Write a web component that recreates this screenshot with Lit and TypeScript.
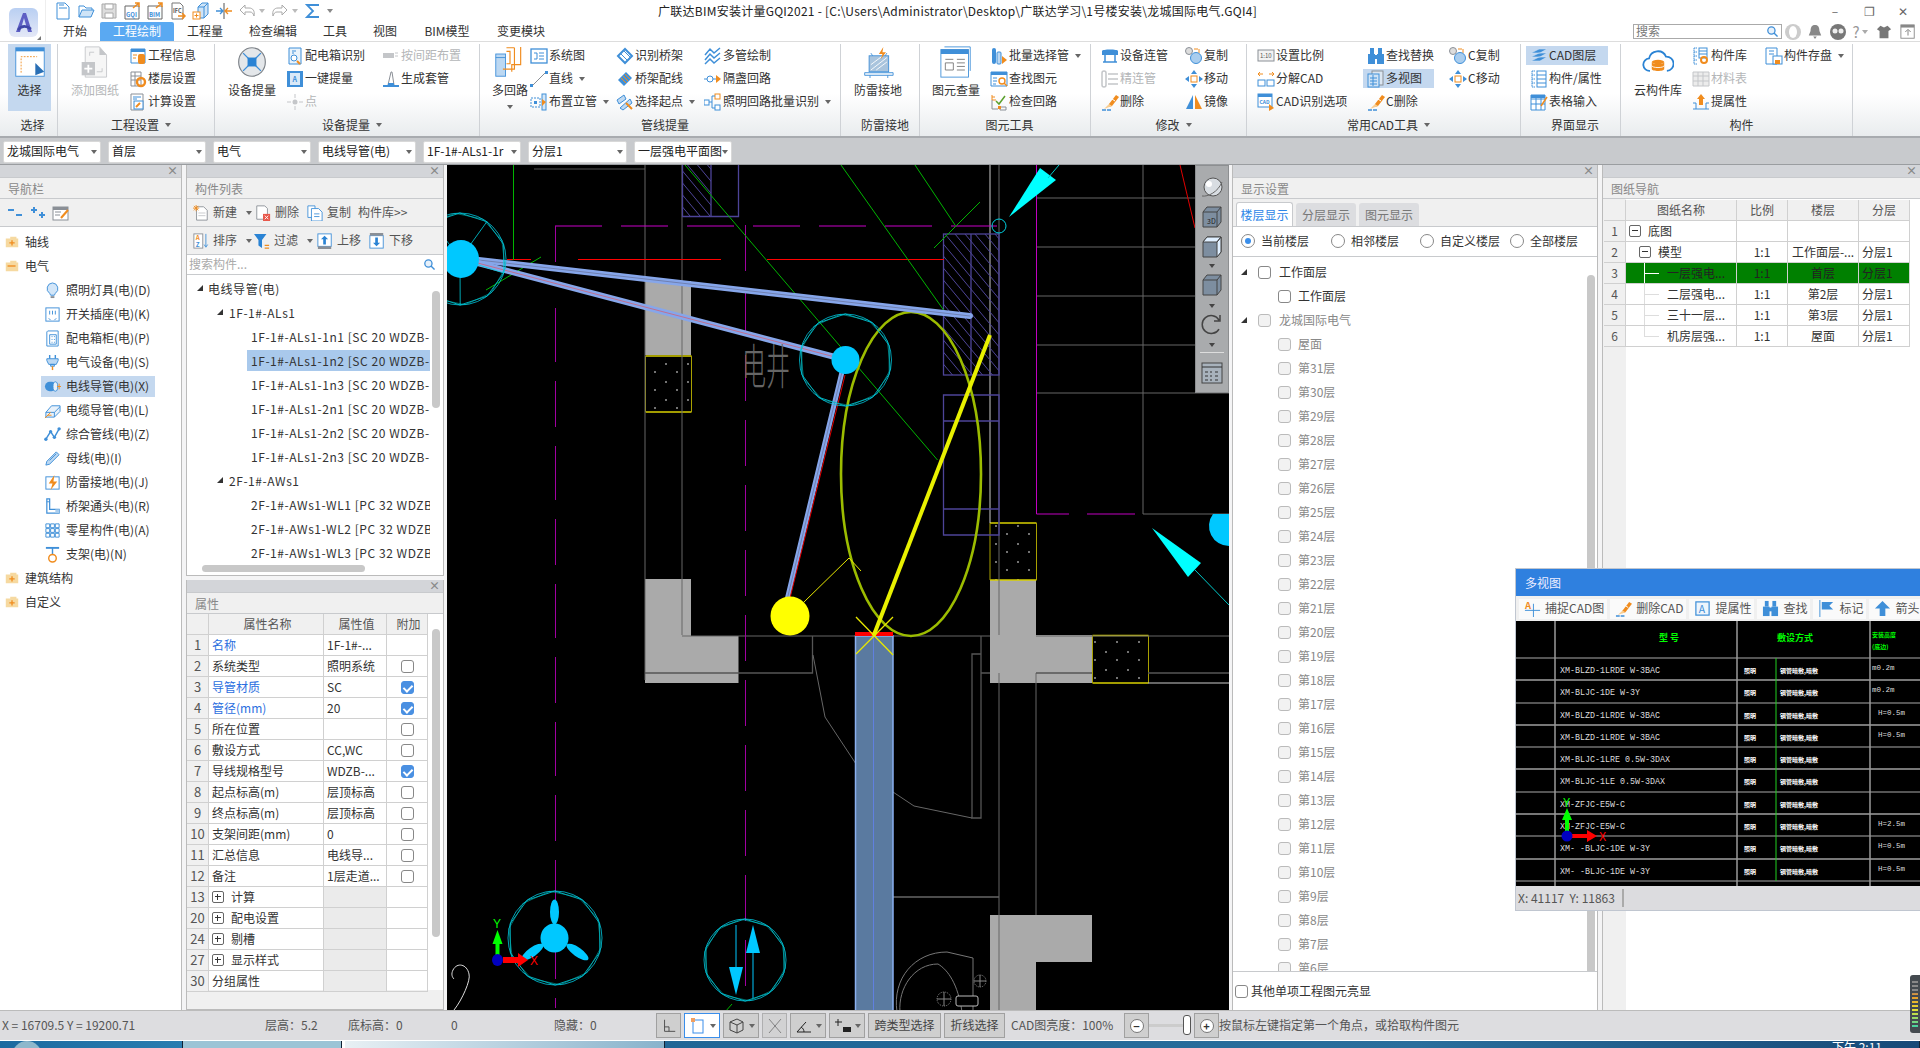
import { LitElement, html, css, svg } from 'lit';
import { customElement } from 'lit/decorators.js';

const B = '#3f8fd8';
const O = '#f08c1e';
const G = '#8a8f96';
const L = '#c4c6c9';

// small icons, drawn in an 18x18 box
const ICONS: Record<string, any> = {
  doc: svg`<path d="M3 1h8l4 4v12H3z" fill="#fff" stroke=${B}/><path d="M5 3h5M5 6h8" stroke=${B}/>`,
  open: svg`<path d="M2 15V4h5l2 2h6v2" fill="none" stroke=${B}/><path d="M2 15l3-7h12l-3 7z" fill="#cfe4f7" stroke=${B}/>`,
  save: svg`<path d="M2 2h14v14H2z" fill="#ddd" stroke="#aaa"/><path d="M5 2h8v5H5zM5 11h8v5H5z" fill="#fff" stroke="#aaa"/>`,
  gq: svg`<path d="M2 4h14v13H2z" fill="#fff" stroke="#666"/><path d="M10 6l6-5M12 1h4v4" fill="none" stroke=${O} stroke-width="1.5"/><text x="3" y="15" font-size="6" fill=${B} font-weight="700">GQI</text>`,
  bim: svg`<path d="M2 4h14v13H2z" fill="#fff" stroke="#666"/><path d="M10 6l6-5M12 1h4v4" fill="none" stroke=${O} stroke-width="1.5"/><text x="3" y="15" font-size="6" fill=${B} font-weight="700">BIM</text>`,
  ifc: svg`<path d="M3 1h8l3 3v13H3z" fill="#fff" stroke="#777"/><text x="4" y="11" font-size="5.5" fill="#555" font-weight="700">IFC</text><path d="M9 14h7M13 11l3 3-3 3" fill="none" stroke=${O} stroke-width="1.5"/>`,
  cube: svg`<path d="M6 5l4-4h6v11l-4 4H6z" fill="#cfe4f7" stroke=${B}/><path d="M6 5h6v11M12 5l4-4" fill="none" stroke=${B}/><rect x="1" y="10" width="7" height="7" fill="#fff" stroke=${O}/><path d="M4.500 11.500v4M2.500 13.500h4" stroke=${O}/>`,
  split: svg`<path d="M9 1v16" stroke="#555"/><path d="M1 9h6M5 6l3 3-3 3" fill="none" stroke=${B} stroke-width="1.3"/><path d="M17 9h-6M13 6l-3 3 3 3" fill="none" stroke=${O} stroke-width="1.3"/>`,
  undo: svg`<path d="M7 3L2 8l5 5V10h5c2 0 3 1 4 4 1-5-1-8-5-8H7z" fill="#fff" stroke="#aaa"/>`,
  redo: svg`<path d="M11 3l5 5-5 5V10H6c-2 0-3 1-4 4-1-5 1-8 5-8h4z" fill="#fff" stroke="#aaa"/>`,
  sigma: svg`<path d="M15 3H3l6 6-6 6h12" fill="none" stroke=${B} stroke-width="1.800"/>`,
  info: svg`<path d="M2 2h14v14H2z" fill="#fff" stroke=${B}/><path d="M2 2h14v3H2z" fill=${B}/><path d="M4 8h4M4 11h3" stroke=${O}/><rect x="9" y="7" width="7" height="10" fill=${O} rx="2"/>`,
  floor: svg`<path d="M2 2h10v14H2zM2 6h10M2 10h10M6 2v14" fill="#fff" stroke=${G}/><circle cx="12" cy="12" r="4" fill="none" stroke=${O} stroke-width="2.400"/>`,
  calc: svg`<path d="M2 1h12v16H2z" fill="#fff" stroke=${G}/><path d="M4 4h8M4 6h4" stroke=${B}/><rect x="5" y="8" width="9" height="8" fill="#fff" stroke=${B}/><path d="M7 14l4-4" stroke=${O} stroke-width="2"/>`,
  box: svg`<path d="M3 1h12v16H3z" fill="#eaf3fb" stroke=${B}/><path d="M6 4h4M6 6h2" stroke=${B}/><circle cx="8" cy="11" r="3" fill="#fff" stroke=${B}/><path d="M11 14l3 3" stroke=${O} stroke-width="2"/>`,
  onekey: svg`<rect x="1" y="1" width="16" height="16" fill=${B}/><rect x="4" y="3" width="10" height="12" fill="#d9e9f8"/><text x="6.500" y="12" font-size="7" fill=${B} font-weight="700">A</text>`,
  point: svg`<circle cx="9" cy="9" r="2.500" fill=${L}/><path d="M1 9h4M13 9h4M9 1v4M9 13v4" stroke=${L}/>`,
  spacing: svg`<path d="M1 6h11v5H1z" fill=${L}/><path d="M13 6h3M13 9h3" stroke=${L}/>`,
  sleeve: svg`<path d="M9 2L6 15h6L10 2z" fill="#fff" stroke=${G}/><path d="M1 15h16v2H1z" fill=${B}/><path d="M6 13h6v2H6z" fill=${B}/>`,
  system: svg`<rect x="1" y="2" width="16" height="14" fill="#fff" stroke=${B} stroke-width="1.300"/><path d="M9 6h5M9 9h5M9 12h5M4 6h3v6H4" fill="none" stroke=${B}/>`,
  line: svg`<path d="M2 16L16 2" stroke=${G}/><rect x="0" y="14" width="3" height="3" fill=${B}/><rect x="15" y="1" width="3" height="3" fill=${B}/>`,
  riser: svg`<path d="M1 5h9v9H1z" fill="none" stroke=${B} stroke-dasharray="2 1"/><rect x="4" y="8" width="3" height="3" fill=${B}/><rect x="12" y="1" width="4" height="16" fill="#d5e7f7" stroke=${B}/><path d="M12 6l4 3-4 4z" fill=${O}/>`,
  bridge: svg`<path d="M2 9l7-7 7 7-7 7z" fill="none" stroke=${B} stroke-width="2"/><path d="M5 7l6 6M8 4l6 6" stroke=${B}/>`,
  bridge2: svg`<path d="M2 10l8-8 6 6-8 8z" fill=${B}/><path d="M5 8l5 5M7 6l5 5M9 4l5 5" stroke=${O}/>`,
  start: svg`<path d="M1 7l7-5 2 4-7 5zM4 15l10-9 2 4-9 7z" fill="#bfd9f1" stroke=${B}/><path d="M10 10l6 6" stroke=${O} stroke-width="2"/>`,
  multi: svg`<path d="M1 8l5-6 4 4 6-5M1 13l5-6 4 4 6-5M1 17l5-5 4 4 6-5" fill="none" stroke=${B} stroke-width="1.500"/>`,
  skip: svg`<circle cx="6" cy="9" r="3" fill="#fff" stroke=${B}/><path d="M0 9h3M9 9h3" stroke=${B}/><path d="M12 5l5 4-5 4z" fill=${O}/>`,
  lamp: svg`<rect x="0" y="7" width="5" height="5" fill="#fff" stroke=${B}/><rect x="11" y="1" width="5" height="5" fill="#fff" stroke=${O}/><rect x="11" y="12" width="5" height="5" fill="#fff" stroke=${B}/><path d="M5 9h3M8 3h3M8 15h3M8 3v12" fill="none" stroke=${B}/>`,
  batch: svg`<rect x="2" y="1" width="4" height="16" fill=${B} rx="2"/><rect x="7" y="5" width="4" height="12" fill="#bcd8f2" stroke=${B} rx="1"/><path d="M12 9l5 4-5 4z" fill=${O}/>`,
  findel: svg`<path d="M1 2h16v14H1z" fill="#fff" stroke=${B}/><path d="M1 2h16v3H1z" fill=${B}/><path d="M3 8h4M3 11h4M3 14h3" stroke=${B}/><circle cx="12" cy="11" r="3" fill="none" stroke=${O} stroke-width="1.400"/><path d="M14 13l3 3" stroke=${O} stroke-width="1.400"/>`,
  check: svg`<path d="M2 2v5h4M2 4h3" fill="none" stroke=${O}/><path d="M6 8l3 3 6-8" fill="none" stroke="#5aa02c" stroke-width="1.500"/><path d="M2 7v9h6M10 14h6v3h-6z" fill="none" stroke=${G}/><rect x="8" y="13" width="3" height="3" fill=${O}/>`,
  devpipe: svg`<path d="M1 4c0-2 16-2 16 0v4H1z" fill=${B}/><path d="M4 8v7h10V8M2 15h14" fill="none" stroke=${B} stroke-width="1.500"/>`,
  finepipe: svg`<rect x="1" y="1" width="4" height="16" rx="2" fill="none" stroke=${L} stroke-width="1.500"/><path d="M7 4h10M7 9h10M7 14h10" stroke=${L} stroke-width="1.500"/>`,
  erase: svg`<path d="M8 11L15 2l3 2-7 9-3 1z" fill=${O}/><path d="M11 6l3 2" stroke="#fff"/><path d="M1 17h9" stroke=${B} stroke-width="1.500" stroke-dasharray="4 1"/><path d="M3 16l5-5 3 2z" fill="#f9cd90"/>`,
  copy: svg`<circle cx="4" cy="4" r="3.500" fill="#ddd" stroke=${G}/><path d="M9 2h4" stroke=${O}/><path d="M14 2v4" stroke=${O}/><circle cx="11" cy="11" r="5.500" fill="#a9cdee" stroke=${B}/>`,
  move: svg`<rect x="6" y="6" width="6" height="6" fill="#fff" stroke=${O}/><path d="M9 0l3 4H6zM9 18l3-4H6zM0 9l4-3v6zM18 9l-4-3v6z" fill=${B}/>`,
  mirror: svg`<path d="M8 2L1 16h7z" fill=${B}/><path d="M10 2l7 14h-7z" fill=${O}/>`,
  scale: svg`<rect x="1" y="3" width="16" height="11" fill="#f3f3f3" stroke=${G}/><text x="3" y="11" font-size="6" fill="#555">1:10</text>`,
  explode: svg`<path d="M1 4h5M3 2L1 4l2 2M17 4h-5M15 2l2 2-2 2" fill="none" stroke=${O}/><rect x="1" y="10" width="7" height="6" fill="none" stroke=${B}/><rect x="10" y="10" width="7" height="6" fill="none" stroke=${B}/>`,
  cadopt: svg`<rect x="1" y="1" width="14" height="13" fill="#fff" stroke=${B}/><path d="M1 1h14v3H1z" fill=${B}/><text x="2.500" y="11" font-size="5" fill=${B} font-weight="700">CAD</text><path d="M12 11l5 4-5 3z" fill=${O}/>`,
  binoc: svg`<rect x="1" y="7" width="7" height="10" fill=${B}/><rect x="10" y="7" width="7" height="10" fill=${B}/><rect x="3" y="1" width="4" height="6" fill=${B}/><rect x="11" y="1" width="4" height="6" fill=${B}/><rect x="7" y="8" width="4" height="4" fill=${B}/>`,
  views: svg`<rect x="5" y="1" width="11" height="14" fill="#dbe6f2" stroke=${G}/><rect x="1" y="4" width="11" height="13" fill="#d0e3f5" stroke=${B}/><path d="M3 8h7M3 11h7M3 14h7M6 5v11" stroke=${B}/>`,
  layers: svg`<path d="M1 6l8-4 8 0-7 4zM1 10l8-4 8 0-7 4zM1 14l8-4 8 0-7 4z" fill=${B} stroke="#d4e4f5" stroke-width=".6"/>`,
  props: svg`<path d="M2 1v16M2 1h3M2 5h3M2 9h3M2 13h3M2 17h3" stroke=${B} stroke-dasharray="1.500 .5"/><rect x="7" y="1" width="9" height="16" fill="#fff" stroke=${B}/><path d="M7 5h9M7 9h9M7 13h9" stroke=${B}/>`,
  tablei: svg`<path d="M1 2h14v15H1zM1 6h14M1 11h14M6 2v15M11 2v15" fill="#fff" stroke=${B}/><path d="M1 2h14v3H1z" fill=${B}/><path d="M11 13l6-9" stroke=${O} stroke-width="1.500"/>`,
  lib: svg`<path d="M2 1v16M2 1h3M2 5h3M2 9h3M2 13h3M2 17h3" stroke=${B} stroke-dasharray="1.500 .5"/><rect x="7" y="1" width="8" height="10" fill="#fff" stroke=${B}/><path d="M7 4h8M7 7h8" stroke=${B}/><circle cx="12" cy="13" r="3" fill="none" stroke=${O} stroke-width="2"/>`,
  material: svg`<path d="M1 2h16v14H1zM1 6h16M1 11h16M6 2v14M11 2v14" fill="#ececec" stroke=${L}/>`,
  pickprop: svg`<path d="M9 1l4 5h-2v6H7V6H5z" fill=${O}/><path d="M1 10h3M14 10h3M1 16h16M4 10v6M14 10v6" fill="none" stroke=${B}/>`,
  store: svg`<path d="M1 1h11v16H1z" fill="#fff" stroke=${B}/><path d="M4 4h5M4 7h5" stroke=${B}/><rect x="8" y="9" width="9" height="8" fill="#fff" stroke=${B}/><rect x="10" y="13" width="5" height="4" fill=${O}/>`,
  // nav tree
  bulb: svg`<path d="M9 1a6 6 0 0 0-3 11l1 2h4l1-2A6 6 0 0 0 9 1z" fill="#d3e6f8" stroke=${B}/><path d="M7 15h4v2H7z" fill=${G}/>`,
  socket: svg`<rect x="2" y="2" width="14" height="14" fill="#fff" stroke=${B}/><path d="M6 5v4M9 5v4M12 5v4M5 13l2 2M13 13l-2 2" stroke=${B}/>`,
  cabinet: svg`<path d="M4 1h11v16H3V2z" fill="#fff" stroke=${B}/><path d="M6 5h7v10H6z" fill="none" stroke=${B}/><path d="M8 7h1M10.500 7h1M8 10h1M10.500 10h1M8 13h1M10.500 13h1" stroke=${B}/>`,
  plug: svg`<path d="M6 1v4M12 1v4" stroke=${B} stroke-width="1.500"/><path d="M3 5h12v2l-2 4H5L3 7zM7 11h4v2H7z" fill="#bcd8f2" stroke=${B}/><path d="M9 13v4" stroke=${O} stroke-width="1.500"/>`,
  conduit: svg`<rect x="1" y="4" width="12" height="10" rx="5" fill=${B}/><ellipse cx="12" cy="9" rx="2.500" ry="5" fill="#e8f1fa" stroke=${B}/><path d="M16 6v6M14 9h4" stroke=${O}/>`,
  cable: svg`<path d="M2 11l6-7h9v6l-6 6H2z" fill="#e8f1fa" stroke=${B}/><path d="M2 11h9v5M11 11l6-6" fill="none" stroke=${B}/><path d="M1 17l6-6M4 14h4" stroke=${O}/>`,
  mixed: svg`<path d="M2 14l5-8 4 6 5-9" fill="none" stroke=${B} stroke-width="1.500"/><circle cx="2" cy="14" r="1.800" fill=${B}/><circle cx="7" cy="6" r="1.800" fill=${B}/><circle cx="11" cy="12" r="1.800" fill=${B}/><circle cx="16" cy="3" r="1.800" fill=${B}/>`,
  busbar: svg`<path d="M3 12L13 2l3 3L6 15l-4 1z" fill="#bcd8f2" stroke=${B}/><path d="M6 11l7-7" stroke=${B}/>`,
  thunder: svg`<rect x="2" y="3" width="14" height="13" fill="#fff" stroke=${B}/><path d="M11 1L5 10h4l-2 7 7-9h-4z" fill=${O}/>`,
  fitting: svg`<path d="M3 1h3v11h10v4H3z" fill="#fff" stroke=${B} stroke-width="1.300"/><rect x="12" y="12" width="4" height="4" fill="#a9cdee"/><path d="M3 4h3" stroke=${B}/>`,
  grid9: svg`<path d="M2 2h4v4H2zM7 2h4v4H7zM12 2h4v4h-4zM2 7h4v4H2zM7 7h4v4H7zM12 7h4v4h-4zM2 12h4v4H2zM7 12h4v4H7zM12 12h4v4h-4z" fill="#fff" stroke=${B}/>`,
  bracket: svg`<path d="M2 2h14" stroke=${B} stroke-width="2"/><path d="M9 2v7" stroke=${B} stroke-width="1.500"/><circle cx="9" cy="13" r="4" fill="none" stroke=${O} stroke-width="1.500"/>`,
  // toolbars
  collapse: svg`<path d="M2 6h6" stroke=${B} stroke-width="2"/><path d="M10 11h6" stroke=${B} stroke-width="2"/>`,
  expand: svg`<path d="M2 6h6M5 3v6M10 11h6M13 8v6" stroke=${B} stroke-width="2"/>`,
  edit: svg`<rect x="1" y="3" width="15" height="13" fill="#fff" stroke=${G}/><path d="M1 3h15v3H1z" fill=${G}/><path d="M3 8h6M3 11h5" stroke=${G}/><path d="M9 14l7-8" stroke=${O} stroke-width="2"/>`,
  newc: svg`<path d="M4 2h8l4 4v11H4z" fill="#fff" stroke=${G}/><path d="M6 9h8M6 12h8" stroke=${L}/><path d="M1 1l5 5M6 1L1 6M3.500 0v7M0 3.500h7" stroke=${O}/>`,
  del: svg`<path d="M2 1h9l3 3v12H2z" fill="#fff" stroke=${G}/><rect x="9" y="10" width="8" height="8" fill="#e8584c"/><path d="M11 12l4 4M15 12l-4 4" stroke="#fff"/>`,
  dup: svg`<path d="M1 1h8v13H1z" fill="#fff" stroke=${B}/><path d="M5 4h8l4 4v10H5z" fill="#fff" stroke=${B}/><path d="M8 10h6M8 13h6" stroke=${B}/>`,
  sort: svg`<rect x="1" y="1" width="10" height="16" fill="#fff" stroke=${G}/><text x="3" y="8" font-size="7" fill=${O} font-weight="700">A</text><text x="3" y="15.500" font-size="7" fill=${B} font-weight="700">Z</text><path d="M14.500 1v14M12.500 13l2 3 2-3" fill="none" stroke=${B}/>`,
  filter: svg`<path d="M0 1h14L9 8v9L5 14V8z" fill="#2a83d4"/><path d="M12 14h5M12 17h5" stroke=${O} stroke-width="1.500"/>`,
  up: svg`<rect x="1" y="1" width="15" height="14" fill="#fff" stroke=${B}/><path d="M1 15h15v3H1z" fill=${G}/><path d="M8.500 3l4 4H10v6H7V7H4.500z" fill="#2a83d4"/>`,
  down: svg`<rect x="1" y="3" width="15" height="14" fill="#fff" stroke=${B}/><path d="M1 0h15v3H1z" fill=${G}/><path d="M8.500 15l-4-4H7V5h3v6h2.500z" fill="#2a83d4"/>`,
  searchB: svg`<circle cx="7.500" cy="7.500" r="5" fill="#e8f1fa" stroke=${B} stroke-width="1.800"/><path d="M11 11l5 5" stroke=${B} stroke-width="2"/>`,
  capture: svg`<path d="M1 11h16M10 4v14" stroke=${B}/><text x="1" y="9" font-size="10" fill=${O} font-weight="700">A</text>`,
  aicon: svg`<rect x="2" y="2" width="14" height="14" fill="#eef5fc" stroke=${B} stroke-width="1.300"/><text x="5" y="14" font-size="11" fill=${B}>A</text>`,
  flag: svg`<path d="M2 0v18" stroke=${B}/><path d="M4 2h12l-4 4 4 4H4z" fill=${B}/>`,
  arrowup: svg`<path d="M9 1l8 8h-5v8H6V9H1z" fill=${B}/>`,
};

// large ribbon icons, 36x36
const BIG: Record<string, any> = {
  select: svg`<rect x="2" y="2" width="32" height="32" fill="#fff" stroke=${B}/><path d="M2 2h32v4H2z" fill=${B}/><path d="M8 30V12h18" fill="none" stroke=${O} stroke-dasharray="2 1.500"/><path d="M24 19l10 10-10 4z" fill="#2a6fb5"/>`,
  addDwg: svg`<path d="M7 1h16l8 9v25H7z" fill="#f6f6f6" stroke=${L}/><path d="M23 1v9h8" fill=${L}/><path d="M12 7v4M12 7h5M26 25v4h-6" fill="none" stroke=${L}/><rect x="3" y="18" width="15" height="15" fill=${L}/><path d="M10.500 21v9M6 25.500h9" stroke="#fff" stroke-width="2"/>`,
  device: svg`<ellipse cx="18" cy="18" rx="15" ry="16" fill="#e4e7ea" stroke="#7d8288" stroke-width="1.300"/><path d="M8 8l20 20M28 8L8 28" stroke=${B} stroke-width="1.500"/><rect x="13" y="13" width="10" height="10" fill="#2a83d4"/>`,
  multi: svg`<path d="M8 2h9v20H8z" fill="none" stroke=${O} stroke-width="0"/><rect x="2" y="9" width="11" height="25" fill="#bcd8f2" stroke=${B}/><path d="M2 13h11" stroke=${B}/><path d="M14 2h9M14 6h4v14h-4M23 2v24H10M30 1v20H20v8" fill="none" stroke=${O} stroke-width="1.300"/>`,
  thunder: svg`<rect x="8" y="11" width="22" height="18" fill="#a9c4dd" stroke=${B}/><path d="M10 27l18-14M10 21l12-9M16 27l12-9" stroke="#fff"/><path d="M3 30h32v3H3z" fill="#eef5fc" stroke=${B}/><path d="M9 33v3M29 33v3M10 8l2 3M28 8l-2 3" stroke=${B}/><path d="M24 1l-5 8h4l-2 6 6-8h-4z" fill=${O}/>`,
  query: svg`<path d="M5 1h29v27" fill="none" stroke=${B}/><rect x="1" y="4" width="31" height="31" fill="#fff" stroke=${B}/><path d="M1 4h31v5H1z" fill=${B}/><path d="M6 15h9M6 19h9v8H6zM19 15h9M19 19h9M19 23h9M19 27h9" fill="none" stroke="#777"/>`,
  cloud: svg`<path d="M9 28a7 7 0 0 1-1-14 10 10 0 0 1 19-2 8 8 0 0 1 1 16" fill="none" stroke="#2a83d4" stroke-width="2"/><ellipse cx="18" cy="18" rx="7" ry="2.500" fill=${O}/><path d="M11 18v8c0 3 14 3 14 0v-8c0 3-14 3-14 0z" fill=${O}/><path d="M11 22c0 3 14 3 14 0" stroke="#fff" fill="none"/>`,
};

type Item = { t?: string; i?: string; caret?: boolean; off?: boolean; hi?: boolean };
type Col = { w: number; ml?: number; big?: string; label?: string; off?: boolean; hi?: boolean; caret?: boolean; items?: Item[] };
type Group = { w: number; pad: number; label: string; caret?: boolean; cols: Col[] };

const GROUPS: Group[] = [
  { w: 58, pad: 8, label: '选择', cols: [{ w: 43, big: 'select', label: '选择', hi: true }] },
  { w: 157, pad: 10, label: '工程设置', caret: true, cols: [
    { w: 54, big: 'addDwg', label: '添加图纸', off: true },
    { w: 80, ml: 7, items: [{ t: '工程信息', i: 'info' }, { t: '楼层设置', i: 'floor' }, { t: '计算设置', i: 'calc' }] },
  ] },
  { w: 265, pad: 10, label: '设备提量', caret: true, cols: [
    { w: 54, big: 'device', label: '设备提量' },
    { w: 96, ml: 7, items: [{ t: '配电箱识别', i: 'box' }, { t: '一键提量', i: 'onekey' }, { t: '点', i: 'point', off: true }] },
    { w: 90, items: [{ t: '按间距布置', i: 'spacing', off: true }, { t: '生成套管', i: 'sleeve' }] },
  ] },
  { w: 361, pad: 10, label: '管线提量', cols: [
    { w: 40, big: 'multi', label: '多回路', caret: true },
    { w: 86, items: [{ t: '系统图', i: 'system' }, { t: '直线', i: 'line', caret: true }, { t: '布置立管', i: 'riser', caret: true }] },
    { w: 88, items: [{ t: '识别桥架', i: 'bridge' }, { t: '桥架配线', i: 'bridge2' }, { t: '选择起点', i: 'start', caret: true }] },
    { w: 130, items: [{ t: '多管绘制', i: 'multi' }, { t: '隔盏回路', i: 'skip' }, { t: '照明回路批量识别', i: 'lamp', caret: true }] },
  ] },
  { w: 79, pad: 10, label: '防雷接地', cols: [{ w: 54, big: 'thunder', label: '防雷接地' }] },
  { w: 171, pad: 9, label: '图元工具', cols: [
    { w: 54, big: 'query', label: '图元查量' },
    { w: 100, ml: 7, items: [{ t: '批量选择管', i: 'batch', caret: true }, { t: '查找图元', i: 'findel' }, { t: '检查回路', i: 'check' }] },
  ] },
  { w: 156, pad: 10, label: '修改', caret: true, cols: [
    { w: 84, items: [{ t: '设备连管', i: 'devpipe' }, { t: '精连管', i: 'finepipe', off: true }, { t: '删除', i: 'erase' }] },
    { w: 60, items: [{ t: '复制', i: 'copy' }, { t: '移动', i: 'move' }, { t: '镜像', i: 'mirror' }] },
  ] },
  { w: 274, pad: 10, label: '常用CAD工具', caret: true, cols: [
    { w: 110, items: [{ t: '设置比例', i: 'scale' }, { t: '分解CAD', i: 'explode' }, { t: 'CAD识别选项', i: 'cadopt' }] },
    { w: 82, items: [{ t: '查找替换', i: 'binoc' }, { t: '多视图', i: 'views', hi: true }, { t: 'C删除', i: 'erase' }] },
    { w: 60, items: [{ t: 'C复制', i: 'copy' }, { t: 'C移动', i: 'move' }] },
  ] },
  { w: 100, pad: 9, label: '界面显示', cols: [
    { w: 88, items: [{ t: 'CAD图层', i: 'layers', hi: true }, { t: '构件/属性', i: 'props' }, { t: '表格输入', i: 'tablei' }] },
  ] },
  { w: 232, pad: 10, label: '构件', cols: [
    { w: 54, big: 'cloud', label: '云构件库' },
    { w: 73, ml: 7, items: [{ t: '构件库', i: 'lib' }, { t: '材料表', i: 'material', off: true }, { t: '提属性', i: 'pickprop' }] },
    { w: 80, items: [{ t: '构件存盘', i: 'store', caret: true }] },
  ] },
];

const TABS = [['开始', 54], ['工程绘制', 74], ['工程量', 62], ['检查编辑', 74], ['工具', 50], ['视图', 50], ['BIM模型', 74], ['变更模块', 74]] as const;
const COMBOS = [['龙城国际电气', 98], ['首层', 98], ['电气', 98], ['电线导管(电)', 98], ['1F-1#-ALs1-1r', 98], ['分层1', 99], ['一层强电平面图', 98]] as const;
// [icon, has a dropdown caret]
const QUICK: [string, boolean?][] = [['doc'], ['open'], ['save'], ['gq'], ['bim'], ['ifc'], ['cube'], ['split'], ['undo', true], ['redo', true], ['sigma']];

const NAV: [string, string][] = [
  ['bulb', '照明灯具(电)(D)'], ['socket', '开关插座(电)(K)'], ['cabinet', '配电箱柜(电)(P)'], ['plug', '电气设备(电)(S)'],
  ['conduit', '电线导管(电)(X)'], ['cable', '电缆导管(电)(L)'], ['mixed', '综合管线(电)(Z)'], ['busbar', '母线(电)(I)'],
  ['thunder', '防雷接地(电)(J)'], ['fitting', '桥架通头(电)(R)'], ['grid9', '零星构件(电)(A)'], ['bracket', '支架(电)(N)'],
];

const LIST: [number, string, boolean?][] = [
  [0, '电线导管(电)'], [1, '1F-1#-ALs1'],
  [2, '1F-1#-ALs1-1n1 [SC 20 WDZB-BYJ-3x2.5]'], [2, '1F-1#-ALs1-1n2 [SC 20 WDZB-BYJ-3x2.5]', true],
  [2, '1F-1#-ALs1-1n3 [SC 20 WDZB-BYJ-3x2.5]'], [2, '1F-1#-ALs1-2n1 [SC 20 WDZB-BYJ-3x2.5]'],
  [2, '1F-1#-ALs1-2n2 [SC 20 WDZB-BYJ-3x2.5]'], [2, '1F-1#-ALs1-2n3 [SC 20 WDZB-BYJ-3x2.5]'],
  [1, '2F-1#-AWs1'], [2, '2F-1#-AWs1-WL1 [PC 32 WDZB-BYJ-5x4]'], [2, '2F-1#-AWs1-WL2 [PC 32 WDZB-BYJ-5x4]'], [2, '2F-1#-AWs1-WL3 [PC 32 WDZB-BYJ-5x4]'],
];

// no, name, value, checkbox (0 off, 1 on, -1 none), blue name, expandable group
const PROPS: [string, string, string, number, boolean?, boolean?][] = [
  ['1', '名称', '1F-1#-...', -1, true], ['2', '系统类型', '照明系统', 0], ['3', '导管材质', 'SC', 1, true], ['4', '管径(mm)', '20', 1, true],
  ['5', '所在位置', '', 0], ['6', '敷设方式', 'CC,WC', 0], ['7', '导线规格型号', 'WDZB-...', 1], ['8', '起点标高(m)', '层顶标高', 0],
  ['9', '终点标高(m)', '层顶标高', 0], ['10', '支架间距(mm)', '0', 0], ['11', '汇总信息', '电线导...', 0], ['12', '备注', '1层走道...', 0],
  ['13', '计算', '', -1, false, true], ['20', '配电设置', '', -1, false, true], ['24', '剔槽', '', -1, false, true], ['27', '显示样式', '', -1, false, true], ['30', '分组属性', '', -1],
];

const FLOORS = ['屋面', ...Array.from({ length: 26 }, (_, i) => `第${31 - i}层`)];

const DRAWINGS: [string, number, string, string, string, string][] = [
  ['1', 0, '底图', '', '', ''], ['2', 1, '模型', '1:1', '工作面层-...', '分层1'], ['3', 2, '一层强电...', '1:1', '首层', '分层1'],
  ['4', 2, '二层强电...', '1:1', '第2层', '分层1'], ['5', 2, '三十一层...', '1:1', '第3层', '分层1'], ['6', 2, '机房层强...', '1:1', '屋面', '分层1'],
];

const MV_ROWS: [string, string][] = [
  ['XM-BLZD-1LRDE W-3BAC', 'm0.2m'], ['XM-BLJC-1DE W-3Y', 'm0.2m'], ['XM-BLZD-1LRDE W-3BAC', 'H=0.5m'], ['XM-BLZD-1LRDE W-3BAC', 'H=0.5m'],
  ['XM-BLJC-1LRE 0.5W-3DAX', ''], ['XM-BLJC-1LE 0.5W-3DAX', ''], ['XM-ZFJC-E5W-C', ''], ['XM-ZFJC-E5W-C', 'H=2.5m'], ['XM- -BLJC-1DE W-3Y', 'H=0.5m'], ['XM- -BLJC-1DE W-3Y', 'H=0.5m'],
];

function ic(name: string, size = 18) {
  return html`<svg class="ic" viewBox="0 0 18 18" width=${size} height=${size}>${ICONS[name]}</svg>`;
}

// decagon plus circle used by the lamp symbols on the plan
function ring(cx: number, cy: number, r: number, spokes = false) {
  const pts = (rot: number) => Array.from({ length: 10 }, (_, i) => {
    const a = rot + (i * Math.PI) / 5;
    return [cx + r * Math.cos(a), cy + r * Math.sin(a)];
  });
  const str = (p: number[][]) => p.map((q) => q.map((n) => n.toFixed(1)).join(',')).join(' ');
  return svg`
    <polygon points=${str(pts(0.31))} fill="none" stroke="#00d8e8" stroke-width=".8"/>
    <polygon points=${str(pts(0.2))} fill="none" stroke="#00b0b0" stroke-width=".6"/>
    <circle cx=${cx} cy=${cy} r=${r} fill="none" stroke="#00c8e0" stroke-width=".8"/>
    ${spokes ? pts(0.31).filter((_, i) => i % 2 === 0).map((p) => svg`<line x1=${cx} y1=${cy} x2=${p[0]} y2=${p[1]} stroke="#00d0e0" stroke-width=".8"/>`) : ''}`;
}

function pipe(x1: number, y1: number, x2: number, y2: number, w = 6, core = '#7080b0') {
  return svg`<line x1=${x1} y1=${y1} x2=${x2} y2=${y2} stroke="#86a6ea" stroke-width=${w} stroke-linecap="round"/>
    <line x1=${x1} y1=${y1} x2=${x2} y2=${y2} stroke=${core} stroke-width="1"/>`;
}

function dotted(x: number, y: number, w: number, h: number) {
  return svg`<rect x=${x} y=${y} width=${w} height=${h} fill="url(#dots)"/>
    <path d="M${x} ${y}h${w}M${x} ${y + h}h${w}" stroke="#d8d000" stroke-width="1.500"/>
    <path d="M${x} ${y}v${h}M${x + w} ${y}v${h}" stroke="#a8a000"/>`;
}

function planSvg() {
  return svg`
  <defs>
    <pattern id="hatch" patternUnits="userSpaceOnUse" width="10" height="12"><path d="M-1 -1.200L11 13.200M-11 -1.200L1 13.200M9 -1.200L21 13.200" stroke="#4d4498"/></pattern>
    <pattern id="dots" patternUnits="userSpaceOnUse" width="22" height="18"><circle cx="6" cy="4" r="1" fill="#999"/><circle cx="17" cy="12" r="1" fill="#999"/></pattern>
  </defs>
  <!-- walls -->
  <path d="M534 169h111" stroke="#555"/>
  <path d="M645 281h46v74h-46zM645 579h46v57h47.500v47h-93.500z" fill="#aaa"/>
  <path d="M990 580h46v55h56v48H990z" fill="#aaa"/>
  <path d="M990 915h102v47h-56v50h-46z" fill="#aaa"/>
  ${dotted(645.500, 356, 46, 56)}${dotted(990, 523, 46.500, 57)}${dotted(1092.500, 635.500, 56, 47.500)}
  <path d="M645 165v515M682 165v470M682 636h308M1036 636h193M999 165v470M999 673v339M1036 673v242" stroke="#666" fill="none"/>
  <path d="M990 165v358M1148 683h81" stroke="#ccc" fill="none"/>
  <path d="M645 673h167.500v-37M981 636v182h-9V654h9M981 673h9M1148 673h81M1036 673h56" stroke="#555" fill="none" stroke-width="1.300"/>
  <path d="M813 655l12 62 35 53 54 36 58 12" fill="none" stroke="#666"/>
  <path d="M878 1012V897h121" fill="none" stroke="#666" stroke-width="1.400"/>
  <!-- right hand grid -->
  <path d="M1036 198h193M1036 247h193M1036 296h193M1036 345h193M1036 393h193M1143 165v349h86" stroke="#666" fill="none"/>
  <path d="M1180 165l15 63" stroke="#e00000"/>
  <!-- duct hatch -->
  <rect x="682.500" y="165" width="28.500" height="51.500" fill="url(#hatch)"/>
  <path d="M682.500 165v51.500h56V165M711 165v51.500" fill="none" stroke="#4d4498" stroke-width="1.300"/>
  <rect x="943.500" y="234" width="55.500" height="141" fill="url(#hatch)" stroke="#4d4498" stroke-width="1.300"/>
  <path d="M971 234v141" stroke="#4d4498" stroke-width="1.300"/>
  <path d="M943.500 395h55.500v140h-55.500zM943.500 421h55.500M943.500 509h55.500" fill="none" stroke="#4d4498" stroke-width="1.300"/>
  <!-- axis lines -->
  <path d="M555 226h442" stroke="#c800c8" stroke-dasharray="47 19"/>
  <path d="M555.500 226v36M555.500 308v700" stroke="#a000a0" stroke-dasharray="54 19 46 19"/>
  <path d="M745.500 225v780" stroke="#a000a0" stroke-dasharray="46 19"/>
  <path d="M1036.500 165v349h32.500M1087 514h48" stroke="#c000c0" fill="none"/>
  <path d="M507 259.500h24M578 259.500h143M767 259.500h177" stroke="#ff0000" stroke-width="1.200"/>
  <path d="M513.500 165v95M685 165L937.500 460M841 165L945 312M915 165l40 60M934 248l46-46M486 290l55-33" stroke="#00b400" fill="none"/>
  <!-- ellipse and leader -->
  <ellipse cx="911" cy="474" rx="70" ry="162" fill="none" stroke="#9cbc00" stroke-width="2.600"/>
  <path d="M804 602l45-44 12 13" fill="none" stroke="#e8e800"/>
  <!-- pipes -->
  ${pipe(470, 259, 970, 316)}
  ${pipe(470, 261, 835, 357, 6, '#c07090')}
  ${pipe(842, 372, 787, 600, 5)}
  <line x1="845" y1="375" x2="790" y2="598" stroke="#e00000"/>
  <text transform="translate(742 384) scale(1 2)" font-size="24" fill="#666" font-weight="300" font-family="'Noto Sans CJK SC', sans-serif">电井</text>
  <!-- lamps -->
  ${ring(460, 259, 46, true)}
  <ellipse cx="461" cy="259" rx="18" ry="19" fill="#00c8ff"/>
  ${ring(845.500, 360, 46)}
  <ellipse cx="845.500" cy="360" rx="14" ry="14" fill="#00c8ff"/>
  <circle cx="790" cy="616" r="19.500" fill="#ffff00"/>
  <!-- highlighted vertical bay -->
  <rect x="855.500" y="636" width="37.500" height="376" fill="#5a7aa0" stroke="#8ab0f0" stroke-width="1.500"/>
  <path d="M873.500 636v376" stroke="#6080e0"/>
  <rect x="855" y="632" width="38" height="4" fill="#ff0000"/>
  <path d="M856 617l37 38M893 617l-37 37" stroke="#e8e800" stroke-width="1.300"/>
  <line x1="990" y1="335" x2="873.500" y2="636" stroke="#e8f000" stroke-width="4"/>
  <!-- fans -->
  ${ring(555, 938, 47)}
  <ellipse cx="554.500" cy="938" rx="14" ry="14.500" fill="#00c8ff"/>
  <ellipse cx="554.500" cy="912" rx="4.500" ry="12.500" fill="#00c8ff"/>
  <ellipse cx="532.500" cy="952" rx="13" ry="4.500" fill="#00c8ff" transform="rotate(-35 532.500 952)"/>
  <ellipse cx="577.500" cy="952" rx="13" ry="4.500" fill="#00c8ff" transform="rotate(35 577.500 952)"/>
  ${ring(745, 960, 41)}
  <path d="M753 925l7 28h-14z" fill="#00c8ff"/><path d="M753 953v45M736 925v42" stroke="#00c8ff"/>
  <path d="M736 995l7-28h-14z" fill="#00c8ff"/>
  <path d="M1009 217l31-49 16 12z" fill="#00ffff"/><path d="M1048 178l11-13" stroke="#00c8c8"/>
  <circle cx="999" cy="226" r="7" fill="none" stroke="#00d0e0"/>
  <path d="M1152 528l49 35-13 14z" fill="#00ffff"/><path d="M1195 570l34 35" stroke="#00c8c8"/>
  <path d="M1213 514h16v32a20 20 0 0 1-16-32z" fill="#00c8ff"/>
  <!-- sink -->
  <path d="M897 1012c-5-34 18-60 50-60l26 6v54M900 1012c-2-24 14-48 38-48 10 6 20 20 24 48" fill="none" stroke="#777"/>
  <rect x="956" y="996" width="22" height="10" rx="2" fill="#000" stroke="#bbb"/>
  <circle cx="980" cy="981" r="6" fill="none" stroke="#888" stroke-dasharray="1 1"/><path d="M974 981h12M980 975v12" stroke="#888"/>
  <circle cx="944" cy="999" r="7" fill="none" stroke="#888" stroke-dasharray="1 1"/><path d="M937 999h14M944 992v14" stroke="#888"/>
  <path d="M725 1012l7-8" stroke="#00b400"/>
  <path d="M454 1010c8-10 17-30 15-36-2-10-12-12-16-4-2 4-1 7 1 9" fill="none" stroke="#ddd"/>
  <!-- ucs axis -->
  <path d="M497.500 930l5 14h-3v14h-4v-14h-3z" fill="#00ff00"/>
  <path d="M503 957h15v-4l10 7-10 7v-4h-15z" fill="#ff0000"/>
  <ellipse cx="497.500" cy="960" rx="5.500" ry="6" fill="#0000c0"/>
  <text x="493" y="928" font-size="12" fill="#00ff00" font-family="'Liberation Sans', sans-serif">Y</text>
  <text x="530" y="965" font-size="12" fill="#ff0000" font-family="'Liberation Sans', sans-serif">X</text>`;
}

function multiViewSvg() {
  const ys = [37, 59, 82, 104, 126, 148, 171, 193, 215, 238, 260];
  return svg`
  <g font-family="'Liberation Mono', monospace">
    <text x="143" y="20" font-size="9" fill="#00ff00" font-family="'Noto Sans CJK SC', sans-serif" font-weight="700">型 号</text>
    <text x="261" y="20" font-size="9" fill="#00ff00" font-family="'Noto Sans CJK SC', sans-serif" font-weight="700">敷设方式</text>
    <text x="356" y="16" font-size="6" fill="#00ff00" font-family="'Noto Sans CJK SC', sans-serif" font-weight="700">安装高度</text>
    <text x="356" y="28" font-size="6" fill="#00ff00" font-family="'Noto Sans CJK SC', sans-serif" font-weight="700">(底边)</text>
    ${ys.map((y, i) => svg`<line x1="0" y1=${y} x2="404" y2=${y} stroke=${i % 2 ? '#eee' : '#aaa'} stroke-width="1.200"/>`)}
    <path d="M39 0v265M221 0v265M354 0v265" stroke="#999" stroke-width="1.500"/>
    <path d="M260 37v223" stroke="#20d020"/>
    ${MV_ROWS.map((r, i) => svg`
      <text x="44" y=${ys[i] + 15} font-size="9" fill="#ddd" textLength=${r[0].length * 5} lengthAdjust="spacingAndGlyphs">${r[0]}</text>
      <text x="228" y=${ys[i] + 15} font-size="6" fill="#fff" font-weight="700" font-family="'Noto Sans CJK SC', sans-serif">照明</text>
      <text x="264" y=${ys[i] + 15} font-size="6" fill="#fff" font-weight="700" font-family="'Noto Sans CJK SC', sans-serif">钢管暗敷,暗敷</text>
      ${r[1] ? svg`<text x=${r[1].startsWith('H') ? 362 : 356} y=${ys[i] + 12} font-size="7.500" fill="#ddd">${r[1]}</text>` : ''}`)}
    <path d="M51 187l5 12h-3v14h-4v-14h-3z" fill="#00ff00"/>
    <path d="M56 213h15v-4l10 6-10 6v-4H56z" fill="#ff0000"/>
    <circle cx="51" cy="215" r="5.500" fill="#0000c0"/>
    <text x="47" y="186" font-size="12" fill="#00ff00">Y</text><text x="83" y="220" font-size="12" fill="#ff0000">X</text>
  </g>`;
}

@customElement('app-root')
class AppRoot extends LitElement {
  static styles = css`
    :host {
      display: block;
      position: relative;
      width: 1920px;
      height: 1048px;
      overflow: hidden;
      background: #fff;
      color: #333;
      font: 12px/1.2 "Noto Sans CJK SC", "Liberation Sans", sans-serif;
    }
    svg { display: block; flex: none; }
    .caret { width: 0; height: 0; border: 3px solid transparent; border-top: 4px solid #666; border-bottom: 0; flex: none; display: inline-block; }

    /* header */
    .head { display: flex; height: 41px; }
    .logo-cell { width: 46px; position: relative; flex: none; border-right: 1px solid #eee; box-sizing: border-box; padding: 8px 0 0 9px; }
    .logo { width: 29px; height: 29px; border-radius: 6px; background: linear-gradient(#b9cff2, #e4e8f7); }
    .logo-cell::after { content: ""; position: absolute; right: 4px; bottom: 1px; border: 2px solid transparent; border-right-color: #777; border-bottom-color: #777; }
    .head-main { flex: 1; min-width: 0; }
    .qrow { display: flex; align-items: center; height: 22px; }
    .quick { width: 612px; display: flex; align-items: center; gap: 5px; padding-left: 8px; box-sizing: border-box; flex: none; }
    .quick .grp { display: flex; align-items: center; gap: 3px; width: 28px; }
    .quick .grp .caret { border-top-color: #bbb; }
    .title { color: #222; white-space: nowrap; font-size: 12px; letter-spacing: .25px; }
    .winbtns { margin-left: auto; display: flex; align-items: center; color: #666; }
    .winbtns span { width: 34px; text-align: center; }
    .trow { display: flex; align-items: stretch; height: 19px; }
    .tab { text-align: center; line-height: 18px; color: #333; flex: none; box-sizing: border-box; }
    .tab:first-child { padding-left: 4px; }
    .tab.on { background: #5aa9f2; color: #fff; border-radius: 2px 2px 0 0; }
    .tools { margin-left: auto; display: flex; align-items: center; }
    .search { width: 149px; height: 15px; border: 1px solid #aaa; margin-top: -1px; display: flex; align-items: center; justify-content: space-between; padding: 0 2px; box-sizing: border-box; color: #777; }
    .tools .t { display: flex; justify-content: center; align-items: center; flex: none; }
    .tools .qm { color: #999; font-size: 15px; gap: 2px; }

    /* ribbon */
    .ribbon { display: flex; height: 97px; box-sizing: border-box; border-top: 1px solid #ddd; border-bottom: 2px solid #a8abaf; background: linear-gradient(#fff 55%, #e9ecee); }
    .group { box-sizing: border-box; border-right: 1px solid #cfd2d6; display: flex; flex-direction: column; margin: 2px 0 0; flex: none; }
    .group-body { flex: 1; display: flex; min-height: 0; }
    .group-label { height: 25px; display: flex; align-items: center; justify-content: center; gap: 6px; color: #333; padding-top: 3px; box-sizing: border-box; }
    .col { flex: none; }
    .big { display: flex; flex-direction: column; align-items: center; height: 67px; padding-top: 2px; box-sizing: border-box; white-space: nowrap; }
    .big.hi { background: #c4d8ef; height: 67px; }
    .big svg { margin-bottom: 5px; }
    .big .caret { margin-top: 8px; }
    .item { display: inline-flex; align-items: center; height: 19px; margin: 2px 0 2px -4px; padding-left: 4px; white-space: nowrap; vertical-align: top; }
    .item.hi { background: #c4d8ef; padding-right: 12px; }
    .item .ic { margin-right: 1px; }
    .item .caret { margin-left: 6px; }
    .off { color: #b4b6b8; }
    .rows { display: flex; flex-direction: column; align-items: flex-start; }

    /* combos */
    .combos { height: 27px; background: #c8cacd; display: flex; align-items: center; gap: 7px; padding: 1px 0 0 3px; border-bottom: 1px solid #9a9da0; box-sizing: border-box; }
    .combo { height: 22px; background: #fff; border: 1px solid #d8d8d8; border-radius: 2px; display: flex; align-items: center; justify-content: space-between; padding: 0 3px; box-sizing: border-box; white-space: nowrap; flex: none; color: #222; }

    /* panels */
    .main { display: flex; height: 845px; background: #f4f4f5; }
    .panel { box-sizing: border-box; display: flex; flex-direction: column; flex: none; background: #fff; border-left: 1px solid #bbb; border-right: 1px solid #bbb; }
    .strip { height: 12px; background: #d3d5d9; position: relative; flex: none; }
    .strip::after { content: "×"; position: absolute; right: 3px; top: -3px; color: #888; font-size: 11px; font-weight: 700; line-height: 16px; }
    .ptitle { height: 22px; flex: none; background: #f0f0f0; color: #888; line-height: 21px; padding-left: 8px; border-bottom: 1px solid #c8cacd; box-sizing: border-box; border-top: 1px solid #c8cacd; }
    .tbar { height: 28px; flex: none; background: #f0f0f0; border-bottom: 1px solid #c8cacd; box-sizing: border-box; display: flex; align-items: center; padding-left: 6px; color: #555; }
    .tb { display: flex; align-items: center; gap: 4px; flex: none; white-space: nowrap; }
    .tb .caret { margin-left: 5px; }
    .row { height: 24px; display: flex; align-items: center; white-space: nowrap; }
    .nav .row { padding-left: 4px; color: #333; }
    .nav .leaf { padding-left: 41px; }
    .nav .leaf > .wrap { display: flex; align-items: center; gap: 5px; height: 21px; padding: 0 6px 0 3px; }
    .nav .leaf > .wrap.sel { background: #c4d8ef; }
    .nav .folder { gap: 5px; }
    .col-stack { width: 258px; flex: none; display: flex; flex-direction: column; gap: 4px; }
    .list { height: 411px; border-bottom: 1px solid #bbb; }
    .listbox { position: relative; flex: 1; overflow: hidden; padding-top: 1px; }
    .list .srch { height: 20px; flex: none; border-bottom: 1px solid #c8cacd; display: flex; align-items: center; justify-content: space-between; padding: 0 7px 0 2px; color: #aaa; box-sizing: border-box; }
    .lrow { height: 24px; display: flex; align-items: center; overflow: hidden; white-space: nowrap; letter-spacing: .55px; }
    .lrow .tx { display: block; height: 21px; line-height: 21px; }
    .lrow.l2 .tx { padding-left: 4px; }
    .lrow.sel .tx { background: #a9c9ec; width: 100%; }
    .tri { width: 6px; height: 6px; background: #333; clip-path: polygon(100% 0, 100% 100%, 0 100%); flex: none; }
    .vbar, .hbar { position: absolute; background: #c8c8c8; border-radius: 4px; }

    .props { flex: 1; min-height: 0; border-bottom: 1px solid #bbb; background: #f0f0f0; }
    .ptable { background: #fff; height: 376px; position: relative; }
    .pr { display: grid; grid-template-columns: 22px 115px 63px 41px; height: 21px; box-sizing: border-box; }
    .pr > div { border-right: 1px solid #d0d0d0; border-bottom: 1px solid #d0d0d0; box-sizing: border-box; display: flex; align-items: center; white-space: nowrap; overflow: hidden; padding-left: 3px; }
    .pr > div:first-child { justify-content: center; padding: 0; background: #f0f0f0; color: #555; font-size: 13px; }
    .pr.hd > div { background: #f0f0f0; justify-content: center; color: #555; }
    .pr .chkcell { justify-content: center; padding: 0; }
    .pr .blue { color: #2c6fe0; }
    .pr .grey { background: #ebebeb; }
    .plus { width: 10px; height: 10px; border: 1px solid #666; border-radius: 2px; margin: 0 7px 0 0; position: relative; flex: none; }
    .plus::before { content: ""; position: absolute; left: 2px; right: 2px; top: 4px; height: 1px; background: #333; }
    .plus.p::after { content: ""; position: absolute; top: 2px; bottom: 2px; left: 4px; width: 1px; background: #333; }
    .chk { width: 13px; height: 13px; border: 1px solid #888; border-radius: 3px; box-sizing: border-box; background: #fff; flex: none; display: block; }
    .chk.on { background: #4a90e2; border-color: #4a90e2; position: relative; }
    .chk.on::after { content: ""; position: absolute; left: 3px; top: 1px; width: 4px; height: 7px; border: solid #fff; border-width: 0 2px 2px 0; transform: rotate(45deg); }
    .chk.dim { background: #f2f2f2; border-color: #bbb; }

    .canvas { width: 782px; margin: 0 3px; flex: none; background: #000; position: relative; overflow: hidden; }
    .canvas > svg { width: 100%; height: 100%; }
    .float { position: absolute; left: 748px; top: 0; width: 34px; height: 228px; background: #a9abad; border: 1px solid #8d8f91; box-sizing: border-box; display: flex; flex-direction: column; align-items: center; padding-top: 10px; }
    .float .caret { border-top-color: #444; margin: 0 0 5px; }
    .float hr { width: 24px; margin: 0 0 7px; border: 0; border-top: 1px solid #ddd; }

    .settings { width: 366px; }
    .tabsrow { display: flex; height: 28px; flex: none; align-items: flex-end; gap: 3px; padding-left: 3px; background: #f0f0f0; border-bottom: 1px solid #c8cacd; box-sizing: border-box; }
    .stab { height: 23px; width: 60px; text-align: center; line-height: 23px; background: #dcdde0; color: #777; border-radius: 3px 3px 0 0; }
    .stab.on { background: #fff; color: #2c86e8; height: 24px; width: 57px; border: 1px solid #c8cacd; border-bottom: 0; box-sizing: border-box; }
    .radios { height: 30px; flex: none; display: flex; align-items: center; border-bottom: 1px solid #c8cacd; box-sizing: border-box; }
    .radio { display: flex; align-items: center; gap: 6px; flex: none; color: #333; }
    .radio i { width: 14px; height: 14px; border: 1px solid #888; border-radius: 50%; box-sizing: border-box; display: block; position: relative; }
    .radio.on i::after { content: ""; position: absolute; left: 3px; top: 3px; width: 6px; height: 6px; border-radius: 50%; background: #3a8eea; }
    .floors { position: relative; flex: 1; min-height: 0; overflow: hidden; padding-top: 3px; }
    .frow { height: 24px; display: flex; align-items: center; gap: 7px; white-space: nowrap; padding-left: 8px; }
    .frow .tri { margin-right: 3px; }
    .frow.top { gap: 8px; }
    .frow.kid { padding-left: 45px; }
    .frow.dim { color: #888; }
    .other { height: 39px; flex: none; border-top: 1px solid #c8cacd; display: flex; align-items: center; gap: 3px; padding-left: 2px; box-sizing: border-box; color: #333; }

    .drawings { flex: 1; min-width: 0; margin-left: 4px; }
    .dtable { flex: 1; padding: 1px 0 0 1px; position: relative; background: linear-gradient(90deg, #f0f0f0 23px, #fff 23px); }
    .dr { display: grid; grid-template-columns: 22px 111px 51px 71px 51px; height: 21px; box-sizing: border-box; width: 306px; }
    .dr > div { border-right: 1px solid #d0d0d0; border-bottom: 1px solid #d0d0d0; box-sizing: border-box; display: flex; align-items: center; justify-content: center; white-space: nowrap; overflow: hidden; background: #fff; }
    .dr > div:first-child { background: #f0f0f0; color: #555; }
    .dr > div:last-child { justify-content: flex-start; padding-left: 3px; }
    .dr .name { justify-content: flex-start; position: relative; }
    .dr.hd > div { background: #f0f0f0; color: #555; justify-content: center; padding: 0; }
    .dr.sel > div:not(:first-child) { background: #008000; color: #222; }
    .dr .name .lead { position: absolute; left: 18px; top: 10px; width: 15px; height: 1px; background: #ddd; }
    .dr .name .trunk { position: absolute; left: 18px; top: 0; width: 1px; height: 100%; background: #ddd; }
    .dr.sel .lead, .dr.sel .trunk { background: #fff; }

    /* status */
    .status { height: 30px; background: #dddde0; display: flex; align-items: center; color: #555; white-space: nowrap; box-sizing: border-box; border-top: 1px solid #bbb; }
    .status .s { flex: none; }
    .sb { height: 25px; flex: none; background: #cfcfcf; border: 1px solid #a0a0a0; box-sizing: border-box; display: flex; align-items: center; justify-content: center; gap: 3px; color: #444; margin-right: 3px; }
    .sb.on { background: #fff; border-color: #3a8eea; }
    .sb.dim { opacity: .75; }
    .slider { width: 36px; height: 3px; background: #ccc; flex: none; position: relative; margin-right: 9px; }
    .slider::after { content: ""; position: absolute; right: -6px; top: -9px; width: 8px; height: 20px; border: 1px solid #555; border-radius: 3px; background: #fff; box-sizing: border-box; }
    .disc { width: 14px; height: 14px; border-radius: 50%; background: #fff; border: 1px solid #777; box-sizing: border-box; font-size: 11px; font-weight: 700; line-height: 12px; text-align: center; color: #333; }

    .taskbar { height: 8px; display: flex; border-top: 1px solid #fff; box-sizing: border-box; overflow: hidden; color: #fff; }
    .taskbar div { flex: none; height: 8px; border-right: 1px solid #123; box-sizing: border-box; position: relative; }
    .tk1 { width: 183px; background: linear-gradient(90deg, #1c6aa0, #2a7db0); }
    .tk1::before { content: ""; position: absolute; left: 12px; top: 0; width: 30px; height: 30px; border-radius: 50%; background: #8fb8cc; }
    .tk2 { width: 159px; background: #9cc4d6; margin-right: 3px; }
    .tk3 { width: 320px; background: linear-gradient(90deg, #e8f0f4, #88b3cc); }
    .tk4 { width: 1255px; background: linear-gradient(90deg, #1f6696, #2a6e9c 60%, #174a78); font-size: 12px; line-height: 12px; padding-left: 1167px; }

    .meter { position: absolute; right: 0; top: 975px; width: 10px; height: 58px; background: #444a50; border-radius: 3px 0 0 3px; }
    .meter i { position: absolute; left: 2px; right: 2px; top: 6px; bottom: 4px; background: repeating-linear-gradient(#0000 0 2px, #444a50 2px 4px), linear-gradient(#888 20%, #e8952a 30%, #e8e030 60%, #30d0b0); }

    /* multi view window */
    .mv { position: absolute; left: 1516px; top: 569px; width: 404px; height: 341px; background: #dcdcdf; display: flex; flex-direction: column; box-shadow: 0 0 0 1px #c0c6d0; }
    .mv-h { height: 27px; flex: none; background: #2f80df; color: #eef; line-height: 27px; padding-left: 9px; font-size: 12px; }
    .mv-t { height: 25px; flex: none; background: #f0f0f0; display: flex; align-items: center; gap: 3px; padding-left: 3px; color: #555; overflow: hidden; }
    .mv-t .b { display: flex; align-items: center; gap: 4px; height: 20px; background: #fafafa; padding: 0 3px 0 5px; white-space: nowrap; flex: none; }
    .mv-c { height: 265px; background: #000; flex: none; }
    .mv-s { flex: 1; display: flex; align-items: center; padding-left: 2px; font-size: 12px; color: #555; }
    .mv-s span { border-right: 2px solid #aaa; height: 18px; line-height: 18px; padding-right: 7px; }
  `;

  renderGroup(g: Group) {
    return html`<div class="group" style="width:${g.w}px;padding-left:${g.pad}px">
      <div class="group-body">
        ${g.cols.map((c) => html`<div class="col" style="width:${c.w}px;margin-left:${c.ml ?? 0}px">
          ${c.big
            ? html`<div class="big ${c.hi ? 'hi' : ''} ${c.off ? 'off' : ''}">
                <svg viewBox="0 0 36 36" width="32" height="32">${BIG[c.big]}</svg>
                <span>${c.label}</span>
                ${c.caret ? html`<span class="caret"></span>` : ''}
              </div>`
            : html`<div class="rows">${c.items!.map((it) => html`
                <div class="item ${it.hi ? 'hi' : ''} ${it.off ? 'off' : ''}">
                  ${ic(it.i!)}<span>${it.t}</span>${it.caret ? html`<span class="caret"></span>` : ''}
                </div>`)}</div>`}
        </div>`)}
      </div>
      <div class="group-label">${g.label}${g.caret ? html`<span class="caret"></span>` : ''}</div>
    </div>`;
  }

  renderHead() {
    return html`<div class="head">
      <div class="logo-cell">
        <div class="logo">
          <svg viewBox="0 0 29 29" width="29" height="29"><path d="M7 24L14 5h3l6 19h-4l-4-14-4 14z" fill="#5e5fc4"/><path d="M9 22c4-5 9-4 13-1" fill="none" stroke="#3f46a8" stroke-width="2.500"/></svg>
        </div>
      </div>
      <div class="head-main">
        <div class="qrow">
          <div class="quick">
            ${QUICK.map((q) => q[1] ? html`<span class="grp">${ic(q[0])}<span class="caret"></span></span>` : ic(q[0]))}
            <span class="caret" style="border-top-color:#888"></span>
          </div>
          <div class="title">广联达BIM安装计量GQI2021 - [C:\\Users\\Administrator\\Desktop\\广联达学习\\1号楼安装\\龙城国际电气.GQI4]</div>
          <div class="winbtns"><span>–</span><span>❐</span><span>✕</span></div>
        </div>
        <div class="trow">
          ${TABS.map((t, i) => html`<div class="tab ${i === 1 ? 'on' : ''}" style="width:${t[1]}px">${t[0]}</div>`)}
          <div class="tools">
            <div class="search">搜索${ic('searchB', 13)}</div>
            <div class="t" style="width:21px"><svg viewBox="0 0 18 18" width="18" height="18"><circle cx="9" cy="9" r="8" fill="#ccc"/><ellipse cx="9" cy="9" rx="4" ry="6" fill="#fff"/></svg></div>
            <div class="t" style="width:24px"><svg viewBox="0 0 18 18" width="16" height="16"><path d="M9 1c-4 0-5 3-5 7l-2 5h14l-2-5c0-4-1-7-5-7zM7 14h4l-2 3z" fill="#888"/></svg></div>
            <div class="t" style="width:22px"><svg viewBox="0 0 18 18" width="18" height="18"><circle cx="9" cy="9" r="8" fill="#777"/><circle cx="6" cy="8" r="2.500" fill="#eee"/><circle cx="12" cy="8" r="2.500" fill="#eee"/></svg></div>
            <div class="t qm" style="width:22px">?<span class="caret" style="border-top-color:#aaa"></span></div>
            <div class="t" style="width:25px"><svg viewBox="0 0 18 18" width="16" height="16"><path d="M5 2L1 6l3 2v8h10V8l3-2-4-4-4 2z" fill="#777"/></svg></div>
            <div class="t" style="width:24px"><svg viewBox="0 0 18 18" width="16" height="16"><rect x="1" y="1" width="15" height="15" fill="#fff" stroke="#888"/><path d="M1 1h15v3H1z" fill="#888"/><path d="M9 13V7M6 9l3-3 3 3" fill="none" stroke="#777"/></svg></div>
          </div>
        </div>
      </div>
    </div>`;
  }

  renderNav() {
    const folder = (t: string, open = false) => html`<div class="row folder">
      <svg viewBox="0 0 18 18" width="16" height="16"><path d="M2 5h5V3h7v2h2v10H2z" fill="#f6d9a0"/><path d="${open ? 'M4 9h9' : 'M9 7v6M6 10h6'}" stroke=${O} stroke-width="1.500"/></svg>
      <span>${t}</span></div>`;
    return html`<div class="panel nav" style="width:182px;border-left:0">
      <div class="strip"></div>
      <div class="ptitle">导航栏</div>
      <div class="tbar" style="gap:5px">${ic('collapse')}${ic('expand')}${ic('edit')}</div>
      <div style="padding-top:3px">
        ${folder('轴线')}${folder('电气', true)}
        ${NAV.map((n) => html`<div class="row leaf"><div class="wrap ${n[0] === 'conduit' ? 'sel' : ''}">${ic(n[0], 17)}<span>${n[1]}</span></div></div>`)}
        ${folder('建筑结构')}${folder('自定义')}
      </div>
    </div>`;
  }

  renderList() {
    const tb = (i: string, t: string, w: number, caret = false) => html`<div class="tb" style="width:${w}px">${ic(i, 16)}<span>${t}</span>${caret ? html`<span class="caret"></span>` : ''}</div>`;
    const indent = [10, 30, 60];
    return html`<div class="panel list">
      <div class="strip"></div>
      <div class="ptitle">构件列表</div>
      <div class="tbar">${tb('newc', '新建', 62, true)}${tb('del', '删除', 52)}${tb('dup', '复制', 51)}<span>构件库&gt;&gt;</span></div>
      <div class="tbar">${tb('sort', '排序', 61, true)}${tb('filter', '过滤', 63, true)}${tb('up', '上移', 52)}${tb('down', '下移', 52)}</div>
      <div class="srch"><span>搜索构件...</span>${ic('searchB', 13)}</div>
      <div class="listbox">
        ${LIST.map((r) => html`<div class="lrow l${r[0]} ${r[2] ? 'sel' : ''}" style="padding-left:${indent[r[0]]}px;width:${243 - indent[r[0]]}px">
          ${r[0] < 2 ? html`<i class="tri" style="margin-right:${r[0] ? 6 : 5}px"></i>` : ''}<span class="tx">${r[1]}</span></div>`)}
        <div class="vbar" style="left:245px;top:16px;width:8px;height:117px"></div>
        <div class="hbar" style="left:15px;top:290px;width:163px;height:7px"></div>
      </div>
    </div>`;
  }

  renderProps() {
    return html`<div class="panel props">
      <div class="strip"></div>
      <div class="ptitle">属性</div>
      <div class="ptable">
        <div class="pr hd"><div></div><div>属性名称</div><div>属性值</div><div>附加</div></div>
        ${PROPS.map((p) => html`<div class="pr">
          <div>${p[0]}</div>
          <div class=${p[4] ? 'blue' : ''}>${p[5] ? html`<i class="plus p"></i>` : ''}${p[1]}</div>
          <div class=${Number(p[0]) > 12 ? 'grey' : ''}>${p[2]}</div>
          <div class="chkcell">${p[3] >= 0 ? html`<i class="chk ${p[3] ? 'on' : ''}"></i>` : ''}</div>
        </div>`)}
        <div class="vbar" style="left:245px;top:15px;width:8px;height:308px"></div>
      </div>
    </div>`;
  }

  renderCanvas() {
    return html`<div class="canvas">
      <svg viewBox="447 165 782 845" preserveAspectRatio="none">${planSvg()}</svg>
      <div class="float">
        <svg viewBox="0 0 24 24" width="24" height="24"><circle cx="13" cy="11" r="9" fill="#d8dde2" stroke="#555"/><path d="M2 20c6 1 16-4 20-14" fill="none" stroke="#666"/><circle cx="9" cy="8" r="3" fill="#fff"/></svg>
        <svg viewBox="0 0 24 24" width="24" height="24" style="margin-top:5px"><path d="M3 7l4-5h14v15l-4 5H3z" fill="#7d8ea0" stroke="#444"/><path d="M3 7h14v15M17 7l4-5" fill="none" stroke="#444"/><text x="7" y="19" font-size="7" fill="#222">3D</text></svg>
        <svg viewBox="0 0 24 24" width="24" height="24" style="margin-top:6px"><path d="M3 7l4-5h14v15l-4 5H3z" fill="#7d8ea0" stroke="#444"/><path d="M17 7l4-5v15l-4 5zM3 7l4-5h14l-4 5z" fill="#dfefff" stroke="#444"/></svg>
        <span class="caret" style="margin-top:5px"></span>
        <svg viewBox="0 0 24 24" width="24" height="24"><path d="M3 7l4-5h14v15l-4 5H3z" fill="#7d8ea0" stroke="#444"/><path d="M3 7h14v15M17 7l4-5" fill="none" stroke="#444"/></svg>
        <span class="caret" style="margin-top:7px"></span>
        <svg viewBox="0 0 24 24" width="24" height="24"><path d="M19 16a9 9 0 1 1 0-9M20 2v6h-6" fill="none" stroke="#444" stroke-width="1.500"/></svg>
        <span class="caret" style="margin-top:6px"></span>
        <hr />
        <svg viewBox="0 0 24 24" width="24" height="26"><rect x="2" y="2" width="20" height="20" fill="#a8b2bc" stroke="#444"/><path d="M2 6h20M5 11h3M10 11h2M15 11h3M5 15h3M10 15h2M15 15h3M5 19h3M10 19h2M15 19h3" stroke="#333"/></svg>
      </div>
    </div>`;
  }

  renderSettings() {
    const radios: [string, number, boolean?][] = [['当前楼层', 90, true], ['相邻楼层', 89], ['自定义楼层', 90], ['全部楼层', 80]];
    return html`<div class="panel settings">
      <div class="strip"></div>
      <div class="ptitle">显示设置</div>
      <div class="tabsrow"><div class="stab on">楼层显示</div><div class="stab">分层显示</div><div class="stab">图元显示</div></div>
      <div class="radios" style="padding-left:8px">
        ${radios.map((r) => html`<div class="radio ${r[2] ? 'on' : ''}" style="width:${r[1]}px"><i></i><span>${r[0]}</span></div>`)}
      </div>
      <div class="floors">
        <div class="frow top"><i class="tri"></i><i class="chk"></i><span>工作面层</span></div>
        <div class="frow kid"><i class="chk"></i><span>工作面层</span></div>
        <div class="frow top dim"><i class="tri"></i><i class="chk dim"></i><span>龙城国际电气</span></div>
        ${FLOORS.map((f) => html`<div class="frow kid dim"><i class="chk dim"></i><span>${f}</span></div>`)}
        <div class="vbar" style="left:354px;top:18px;width:8px;height:720px"></div>
      </div>
      <div class="other"><i class="chk"></i><span>其他单项工程图元亮显</span></div>
    </div>`;
  }

  renderDrawings() {
    return html`<div class="panel drawings" style="border-right:0">
      <div class="strip"></div>
      <div class="ptitle">图纸导航</div>
      <div class="dtable">
        <div class="dr hd"><div></div><div>图纸名称</div><div>比例</div><div>楼层</div><div>分层</div></div>
        ${DRAWINGS.map((d, i) => html`<div class="dr ${i === 2 ? 'sel' : ''}">
          <div>${d[0]}</div>
          <div class="name" style="padding-left:${[3, 13, 41][d[1]]}px">
            ${d[1] === 2 ? html`<i class="trunk" style="${i === 5 ? 'height:11px' : ''}"></i><i class="lead"></i>` : ''}
            ${d[1] < 2 ? html`<i class="plus"></i>` : ''}<span>${d[2]}</span>
          </div>
          <div>${d[3]}</div><div>${d[4]}</div><div>${d[5]}</div>
        </div>`)}
      </div>
    </div>`;
  }

  renderStatus() {
    const cell = (t: string, w: number, ml = 0) => html`<span class="s" style="width:${w}px;margin-left:${ml}px">${t}</span>`;
    return html`<div class="status">
      ${cell('X = 16709.5 Y = 19200.71', 263, 2)}${cell('层高：5.2', 83)}${cell('底标高：0', 103)}${cell('0', 103)}${cell('隐藏：0', 102)}
      <div class="sb" style="width:25px"><svg viewBox="0 0 18 18" width="16" height="16"><path d="M4 2v13h12M4 10h5v5" fill="none" stroke="#444"/></svg></div>
      <div class="sb on" style="width:36px"><svg viewBox="0 0 18 18" width="18" height="18"><rect x="4" y="3" width="10" height="13" fill="none" stroke="#3a8eea"/><rect x="2" y="1" width="4" height="4" fill="#f2a060"/></svg><span class="caret"></span></div>
      <div class="sb" style="width:36px"><svg viewBox="0 0 18 18" width="18" height="18"><path d="M2 5l7-3 6 3v8l-6 3-7-3zM2 5l7 3 6-3M9 8v8" fill="none" stroke="#444"/></svg><span class="caret"></span></div>
      <div class="sb dim" style="width:25px"><svg viewBox="0 0 18 18" width="18" height="18"><path d="M3 2l12 14M15 2L3 16" stroke="#666"/><circle cx="9" cy="9" r="1" fill="#666"/></svg></div>
      <div class="sb" style="width:36px"><svg viewBox="0 0 18 18" width="18" height="18"><path d="M2 15h14M2 15l9-10M6 10c2 1 3 3 3 5" fill="none" stroke="#222"/></svg><span class="caret"></span></div>
      <div class="sb" style="width:36px"><svg viewBox="0 0 18 18" width="18" height="18"><path d="M4 2v7M1 5h7" stroke="#222"/><rect x="9" y="10" width="8" height="5" fill="#222"/></svg><span class="caret"></span></div>
      <div class="sb" style="width:73px">跨类型选择</div>
      <div class="sb" style="width:61px;margin-right:6px">折线选择</div>
      <span class="s" style="width:113px">CAD图亮度：100%</span>
      <div class="sb" style="width:25px;margin:0"><span class="disc">−</span></div>
      <div class="slider"></div>
      <div class="sb" style="width:25px;margin:0"><span class="disc">+</span></div>
      <span class="s">按鼠标左键指定第一个角点，或拾取构件图元</span>
    </div>`;
  }

  render() {
    return html`
      ${this.renderHead()}
      <div class="ribbon">${GROUPS.map((g) => this.renderGroup(g))}</div>
      <div class="combos">
        ${COMBOS.map((c) => html`<div class="combo" style="width:${c[1]}px"><span>${c[0]}</span><span class="caret"></span></div>`)}
      </div>
      <div class="main">
        ${this.renderNav()}
        <div class="col-stack" style="margin-left:4px">${this.renderList()}${this.renderProps()}</div>
        ${this.renderCanvas()}
        ${this.renderSettings()}
        ${this.renderDrawings()}
      </div>
      ${this.renderStatus()}
      <div class="taskbar"><div class="tk1"></div><div class="tk2"></div><div class="tk3"></div><div class="tk4">下午 2:11</div></div>
      <div class="meter"><i></i></div>
      <div class="mv">
        <div class="mv-h">多视图</div>
        <div class="mv-t">
          <div class="b">${ic('capture', 17)}捕捉CAD图</div>
          <div class="b">${ic('erase', 17)}删除CAD</div>
          <div class="b">${ic('aicon', 17)}提属性</div>
          <div class="b">${ic('binoc', 17)}查找</div>
          <div class="b">${ic('flag', 17)}标记</div>
          <div class="b">${ic('arrowup', 17)}箭头</div>
        </div>
        <div class="mv-c"><svg viewBox="0 0 404 265" width="404" height="265">${multiViewSvg()}</svg></div>
        <div class="mv-s"><span>X: 41117&nbsp; Y: 11863</span></div>
      </div>
    `;
  }
}
